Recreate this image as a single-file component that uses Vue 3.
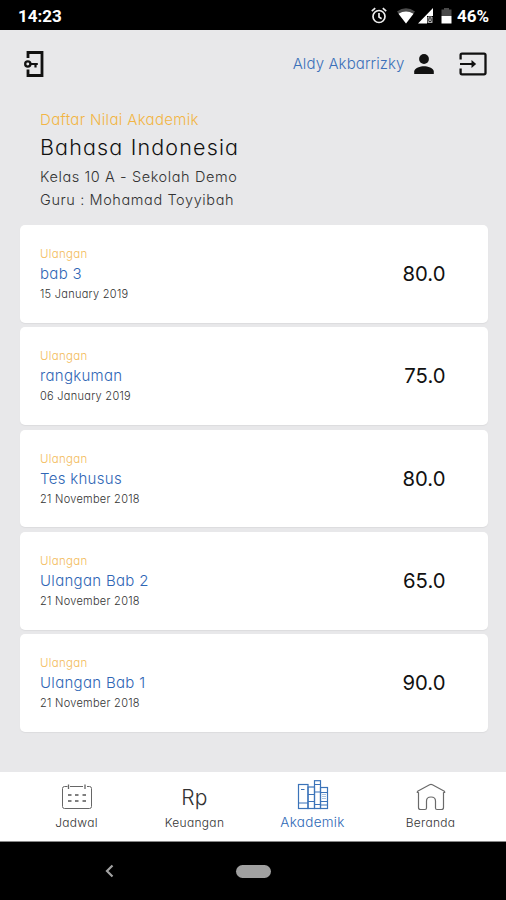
<script setup>
const grades = [
  { title: 'bab 3', date: '15 January 2019', score: '80.0' },
  { title: 'rangkuman', date: '06 January 2019', score: '75.0' },
  { title: 'Tes khusus', date: '21 November 2018', score: '80.0' },
  { title: 'Ulangan Bab 2', date: '21 November 2018', score: '65.0' },
  { title: 'Ulangan Bab 1', date: '21 November 2018', score: '90.0' },
]
</script>

<template>
  <div class="screen">
    <div class="status">
      <span class="clock">14:23</span>
      <svg class="status-icons" width="84" height="20" viewBox="0 0 84 20">
        <g fill="none" stroke="#eee" stroke-width="1.7">
          <circle cx="9" cy="10.500" r="6" />
          <path d="M9 7v4l2.600 1.700M1.800 5.100l3.400-3M16.200 5.100l-3.400-3" />
        </g>
        <path d="M27 5.500Q36 -.9 45 5.500L36 17.500z" fill="#4c4c4c" />
        <path d="M28.500 7.800Q36 3.400 43.500 7.800L36 17.500z" fill="#fff" />
        <path d="M63 2v8h-6v7.500H48z" fill="#fff" />
        <path d="M58 11h4v5.500h-4zM58 11l4 5.500M62 11l-4 5.500" fill="none" stroke="#aaa" stroke-width="1" />
        <path d="M71.500 3.500h2.500V2h5v1.500H81.500V10H71.500z" fill="#4a4a4a" />
        <path d="M71.500 10h10v7.500h-10z" fill="#fff" />
      </svg>
      <span class="percent">46%</span>
    </div>

    <header class="topbar">
      <svg width="22" height="28" viewBox="0 0 22 28" fill="none" stroke="#111" stroke-width="2.800">
        <path d="M5 8V2.500H19V25.500H5V19.500" />
        <circle cx="4.800" cy="14" r="2.600" stroke-width="2.300" />
        <path d="M7 14h7.800M12.500 14v3.500" stroke-width="2.200" />
      </svg>
      <div class="user">
        <span class="user-name">Aldy Akbarrizky</span>
        <svg width="20" height="20" viewBox="0 0 20 20" fill="#111">
          <circle cx="10" cy="5" r="4.900" />
          <path d="M.2 20v-2.600c0-3.400 6.500-5.200 9.800-5.200s9.800 1.800 9.800 5.200V20z" />
        </svg>
        <svg class="exit" width="28" height="24" viewBox="0 0 28 24" fill="none" stroke="#111" stroke-width="2.300">
          <path d="M1.600 7.500V3Q1.600 1.600 3 1.600H25Q26.500 1.600 26.500 3V21Q26.500 22.300 25 22.300H3Q1.600 22.300 1.600 21V16.500" />
          <path d="M1 12H15.500" stroke-width="2" />
          <path d="M12.500 8L17.200 12L12.500 16z" fill="#111" stroke="none" />
        </svg>
      </div>
    </header>

    <section class="heading">
      <p class="eyebrow">Daftar Nilai Akademik</p>
      <h1>Bahasa Indonesia</h1>
      <p class="meta">Kelas 10 A - Sekolah Demo</p>
      <p class="meta">Guru : Mohamad Toyyibah</p>
    </section>

    <main class="list">
      <article v-for="g in grades" :key="g.title" class="card">
        <div class="info">
          <p class="kind">Ulangan</p>
          <p class="title">{{ g.title }}</p>
          <p class="date">{{ g.date }}</p>
        </div>
        <span class="score">{{ g.score }}</span>
      </article>
    </main>

    <nav class="tabs">
      <div class="tab">
        <svg class="tab-icon" width="32" height="32" viewBox="0 0 32 32" fill="none" stroke="#666" stroke-width="1">
          <path d="M6.500 6.500H3.500Q1.500 6.500 1.500 8.500V26.500Q1.500 28.500 3.500 28.500H28.500Q30.500 28.500 30.500 26.500V8.500Q30.500 6.500 28.500 6.500H26M9 6.500H22" />
          <path d="M7.500 4.500V9M24 4.500V9" stroke-width="1.300" />
          <path d="M7 15h3.500M14 15h3.500M21.500 15H25M7 21h3.500M14 21h3.500M21.500 21H25" stroke-width="1.500" stroke="#555" />
        </svg>
        <span>Jadwal</span>
      </div>
      <div class="tab">
        <b class="rp">Rp</b>
        <span>Keuangan</span>
      </div>
      <div class="tab active">
        <svg class="tab-icon" width="32" height="32" viewBox="0 0 32 32" fill="none" stroke="#3b73b9" stroke-width="1.200">
          <rect x="1.500" y="4.500" width="9.500" height="24" />
          <path d="M4 9.500h3.500M1.500 23h9.500" />
          <rect x="11" y="7" width="6.500" height="21.500" />
          <path d="M11 14.500h6.500M11 21.500h6.500" />
          <rect x="17.500" y="0.700" width="6" height="27.800" />
          <path d="M17.500 4.500h6M17.500 12h6M17.500 24.500h6" />
          <rect x="23.500" y="7.500" width="7" height="21" />
          <path d="M23.500 12.500h7M23.500 21.500h7M23.500 25h7" />
          <path d="M25 14.500h4M25 16.500h4M25 18.500h4" stroke="#a9c2e1" />
        </svg>
        <span>Akademik</span>
      </div>
      <div class="tab">
        <svg class="tab-icon" width="32" height="32" viewBox="0 0 32 32" fill="none" stroke="#6a6a6a" stroke-width="1.200" stroke-linejoin="round">
          <path d="M3.500 12.300Q1.400 13.100 2.600 11.200L14.600 4.800Q16 4.100 17.400 4.800L29.400 11.200Q30.600 13.100 28.500 12.300" />
          <path d="M3.500 12.300V27.500Q3.500 29.500 5.500 29.500H10Q11.500 29.500 11.500 28V21Q11.500 17 16 17T20.500 21V28Q20.500 29.500 22 29.500H26.500Q28.500 29.500 28.500 27.500V12.300" />
        </svg>
        <span>Beranda</span>
      </div>
    </nav>

    <div class="system">
      <svg width="9" height="14" viewBox="0 0 9 14" fill="none" stroke="#a2a2a2" stroke-width="2.200">
        <path d="M7.500 1.500L2 7L7.500 12.500" />
      </svg>
      <div class="pill"></div>
    </div>
  </div>
</template>

<style>
body {
  background: #e8e8ea;
}
</style>

<style scoped>
.screen {
  width: 506px;
  height: 900px;
  display: flex;
  flex-direction: column;
  background: #e8e8ea;
  font-family: Inter, "Open Sans", sans-serif;
  font-weight: 300;
  font-feature-settings: "cv11";
  color: #222;
}
p,
h1 {
  margin: 0;
  white-space: nowrap;
}
.status {
  height: 30px;
  box-sizing: border-box;
  padding: 2px 16px 0 18px;
  display: flex;
  align-items: center;
  background: #000;
  color: #fff;
  font-family: Roboto, sans-serif;
  font-weight: 700;
  font-size: 17px;
}
.clock {
  flex: 1;
}
.status-icons {
  margin-right: 3px;
}
.percent {
  width: 33px;
  font-size: 17px;
}
.topbar {
  height: 68px;
  padding: 0 19.500px 0 23px;
  display: flex;
  align-items: center;
  justify-content: space-between;
}
.user {
  display: flex;
  align-items: center;
}
.user-name {
  margin-right: 9px;
  padding-bottom: 2px;
  color: #3b70b9;
  font-size: 15px;
  letter-spacing: 0.1px;
}
.exit {
  margin-left: 25px;
}
.heading {
  height: 115px;
  padding: 12px 40px 0;
  box-sizing: border-box;
  margin-bottom: 12px;
}
.eyebrow {
  color: #f2b544;
  font-size: 15px;
  line-height: 20px;
  letter-spacing: 0.34px;
}
h1 {
  font-size: 21.500px;
  line-height: 35px;
  font-weight: 300;
  letter-spacing: 1.150px;
  color: #111;
}
.meta {
  font-size: 14.500px;
  line-height: 23px;
  letter-spacing: 0.600px;
  color: #333;
}
.list {
  flex: 1;
  padding: 0 18.500px 0 20px;
  display: flex;
  flex-direction: column;
  gap: 4.400px;
}
.card {
  height: 97.900px;
  box-sizing: border-box;
  padding: 0 42px 1px 20px;
  display: flex;
  align-items: center;
  justify-content: space-between;
  background: #fff;
  border-radius: 5px;
  box-shadow: 0 1px 1px #dcdcde;
}
.info {
  padding-top: 2px;
}
.kind {
  color: #f3bc5c;
  font-size: 11.500px;
  line-height: 18px;
  letter-spacing: 0.3px;
}
.title {
  color: #2f66b5;
  font-size: 15px;
  line-height: 22px;
  letter-spacing: 0.3px;
}
.date {
  color: #333;
  font-size: 11px;
  line-height: 19px;
  letter-spacing: 0.28px;
}
.score {
  color: #111;
  font-size: 20.300px;
  font-weight: 400;
}
.tabs {
  height: 70px;
  box-sizing: border-box;
  padding: 0 16.500px 0 17.500px;
  display: grid;
  grid-template-columns: repeat(4, 1fr);
  background: #fff;
  border-bottom: 1px solid #888;
}
.tab {
  display: flex;
  flex-direction: column;
  align-items: center;
  padding-top: 8px;
  font-size: 12px;
  line-height: 18px;
  letter-spacing: 0.3px;
  color: #333;
}
.tab-icon {
  margin-bottom: 2px;
}
.rp {
  height: 34px;
  line-height: 36px;
  font-size: 21px;
  font-weight: 300;
}
.active {
  color: #2d68b5;
  font-size: 13.500px;
  line-height: 16px;
}
.system {
  height: 58px;
  padding-left: 105px;
  display: flex;
  align-items: center;
  background: #000;
}
.pill {
  width: 35px;
  height: 13px;
  margin-left: 122px;
  border-radius: 7px;
  background: #a0a0a0;
}
</style>
